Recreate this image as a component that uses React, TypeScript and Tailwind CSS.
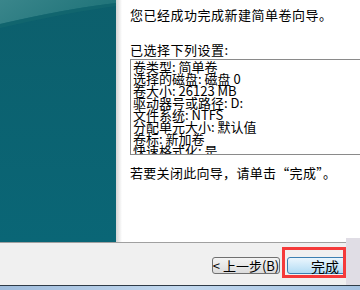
import React from "react";

const cjk = { fontFamily: '"Noto Sans CJK SC", "Noto Sans", sans-serif' };

function Banner() {
  return (
    <svg width="116" height="242" viewBox="0 0 116 242" className="block">
      <defs>
        <linearGradient id="bg" x1="0" y1="0" x2="0" y2="1">
          <stop offset="0" stopColor="#0c5f6c" />
          <stop offset="1" stopColor="#0a6676" />
        </linearGradient>
        <linearGradient id="hl" x1="0" y1="0" x2="1" y2="0.3">
          <stop offset="0" stopColor="#3a868b" />
          <stop offset="1" stopColor="#1f7379" />
        </linearGradient>
      </defs>
      <rect width="116" height="242" fill="url(#bg)" />
      <path d="M0 0 H116 V3 Q70 8 0 24 Z" fill="url(#hl)" />
      <path d="M0 24 Q70 8 116 3 V6 Q70 12 0 28 Z" fill="#16696f" opacity="0.6" />
    </svg>
  );
}

export default function App() {
  const lines = [
    "卷类型: 简单卷",
    "选择的磁盘: 磁盘 0",
    "卷大小: 26123 MB",
    "驱动器号或路径: D:",
    "文件系统: NTFS",
    "分配单元大小: 默认值",
    "卷标: 新加卷",
    "快速格式化: 是",
  ];
  return (
    <div className="relative w-[360px] h-[290px] overflow-hidden bg-white text-black" style={cjk}>
      <div className="flex h-[242px]">
        <div className="w-[116px] shrink-0">
          <Banner />
        </div>
        <div className="w-[6px] shrink-0 bg-gradient-to-r from-[#d4d4d4] to-white" />
        <div className="flex-1 pl-[8px] pt-[7px] overflow-hidden">
          <div className="text-[13px] leading-[16px] tracking-[0.5px] whitespace-nowrap">您已经成功完成新建简单卷向导。</div>
          <div className="mt-[19px] text-[13px] leading-[16px] tracking-[0.5px] whitespace-nowrap">已选择下列设置:</div>
          <div className="mt-[1px] w-[260px] h-[96px] border border-[#8a8a8a] overflow-hidden pl-[2px] pt-[1px]">
            {lines.map((l) => (
              <div key={l} className="text-[13px] leading-[12px] whitespace-nowrap">
                {l}
              </div>
            ))}
          </div>
          <div className="mt-[10px] text-[13px] leading-[16px] tracking-[0.3px] whitespace-nowrap">若要关闭此向导，请单击“完成”。</div>
        </div>
      </div>
      <div className="h-[1px] bg-[#a0a0a0]" />
      <div className="h-[42px] bg-[#f0f0f0] flex items-start pl-[212px] pt-[14px] gap-[7px]">
        <div className="w-[68px] h-[17px] shrink-0 rounded-[3px] border border-[#707070] bg-gradient-to-b from-[#f4f4f4] to-[#dcdcdc] flex items-center justify-center text-[13px] leading-[13px] whitespace-nowrap">
          &lt; 上一步(B)
        </div>
        <div className="w-[76px] h-[17px] shrink-0 rounded-[3px] border border-[#3c7fb1] bg-gradient-to-b from-[#ebf6fd] to-[#b2dcf4] flex items-center justify-center text-[14px] leading-[14px]">
          完成
        </div>
      </div>
      <div className="h-[1px] bg-[#2f3b47]" />
      <div className="h-[4px] bg-gradient-to-r from-[#9fbcdc] via-[#c2d8ee] to-[#a6c3e2]" />
      <div className="absolute left-[346px] top-[238px] w-[14px] h-[47px] bg-[#e0dde5]" />
      <div className="absolute left-[282px] top-[247px] w-[64px] h-[31px] border-[3px] border-[#f53a3a]" />
    </div>
  );
}
